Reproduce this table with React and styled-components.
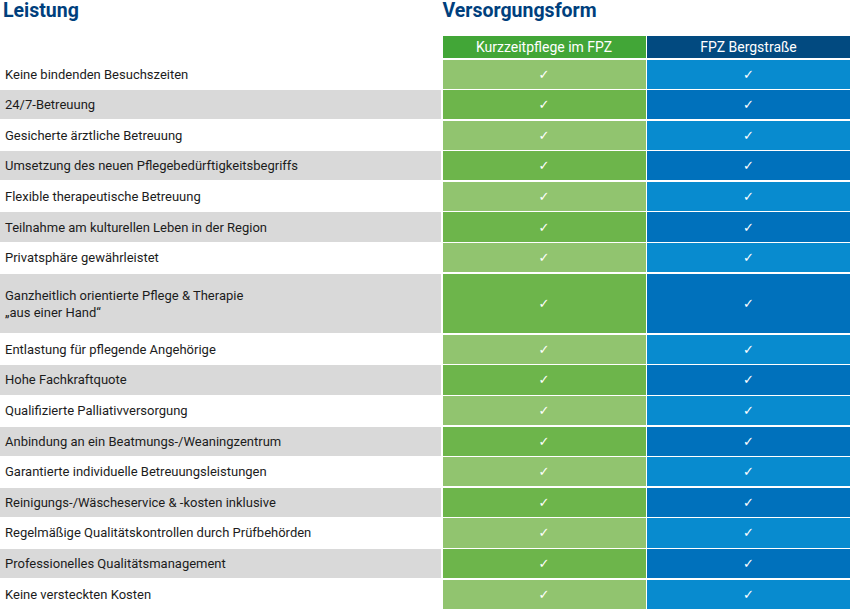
import React from "react";
import styled, { createGlobalStyle } from "styled-components";

const Global = createGlobalStyle`
  html, body { margin: 0; padding: 0; background: #fff; }
  body { font-family: Roboto, "Liberation Sans", Arial, sans-serif; }
`;

const Page = styled.div`
  width: 850px;
  display: grid;
  grid-template-columns: 441px 203px 203px;
  grid-template-rows: 34px 22.5px;
  grid-auto-rows: 29.1px;
  column-gap: 1.5px;
  row-gap: 1.5px;
`;

const Title = styled.h1`
  margin: 0;
  font-size: 19.5px;
  line-height: 22px;
  font-weight: 700;
  color: #003f7d;
  padding-left: ${(p) => p.$pad || 0}px;
  grid-column: ${(p) => p.$col};
  grid-row: 1;
`;

const HeadCell = styled.div`
  grid-row: 2;
  background: ${(p) => p.$bg};
  color: #fff;
  font-size: 14px;
  font-weight: 400;
  display: flex;
  align-items: center;
  justify-content: center;
`;

const Spacer = styled.div`
  grid-row: 2;
`;

const Label = styled.div`
  background: ${(p) => (p.$alt ? "#d9d9d9" : "#fff")};
  color: #1c1c1c;
  font-size: 13px;
  line-height: 17px;
  padding-left: 5px;
  display: flex;
  align-items: center;
  grid-row: span ${(p) => p.$span};
`;

const Check = styled.div`
  background: ${(p) => p.$bg};
  color: #fff;
  font-family: "DejaVu Sans", sans-serif;
  font-size: 13px;
  display: flex;
  align-items: center;
  justify-content: center;
  grid-row: span ${(p) => p.$span};
`;

const rows = [
  "Keine bindenden Besuchszeiten",
  "24/7-Betreuung",
  "Gesicherte ärztliche Betreuung",
  "Umsetzung des neuen Pflegebedürftigkeitsbegriffs",
  "Flexible therapeutische Betreuung",
  "Teilnahme am kulturellen Leben in der Region",
  "Privatsphäre gewährleistet",
  ["Ganzheitlich orientierte Pflege & Therapie", "„aus einer Hand“"],
  "Entlastung für pflegende Angehörige",
  "Hohe Fachkraftquote",
  "Qualifizierte Palliativversorgung",
  "Anbindung an ein Beatmungs-/Weaningzentrum",
  "Garantierte individuelle Betreuungsleistungen",
  "Reinigungs-/Wäscheservice & -kosten inklusive",
  "Regelmäßige Qualitätskontrollen durch Prüfbehörden",
  "Professionelles Qualitätsmanagement",
  "Keine versteckten Kosten",
];

export default function App() {
  return (
    <>
      <Global />
      <Page>
        <Title $col={1} $pad={3}>Leistung</Title>
        <Title $col="2 / span 2">Versorgungsform</Title>
        <Spacer />
        <HeadCell $bg="#42a637">Kurzzeitpflege im FPZ</HeadCell>
        <HeadCell $bg="#024a80">FPZ Bergstraße</HeadCell>
        {rows.map((r, i) => {
          const alt = i % 2 === 1;
          const span = Array.isArray(r) ? 2 : 1;
          return (
            <React.Fragment key={i}>
              <Label $alt={alt} $span={span}>
                {Array.isArray(r) ? (
                  <span>
                    {r[0]}
                    <br />
                    {r[1]}
                  </span>
                ) : (
                  r
                )}
              </Label>
              <Check $span={span} $bg={alt ? "#6db54b" : "#91c46f"}>✓</Check>
              <Check $span={span} $bg={alt ? "#0071bc" : "#088bcf"}>✓</Check>
            </React.Fragment>
          );
        })}
      </Page>
    </>
  );
}
